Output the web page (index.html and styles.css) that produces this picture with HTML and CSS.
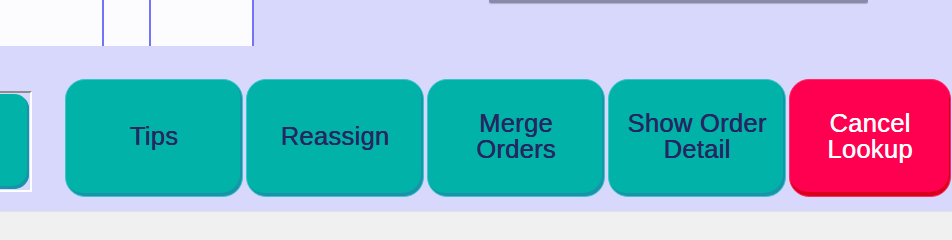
FILE: index.html
```html
<!DOCTYPE html>
<html>
<head>
<meta charset="utf-8">
<link rel="stylesheet" href="styles.css">
</head>
<body>
<div class="screen">
  <div class="top">
    <div class="grid">
      <div class="cell c1"></div>
      <div class="cell c2"></div>
      <div class="cell c3"></div>
    </div>
    <div class="topbar"></div>
  </div>
  <div class="actions">
    <div class="stub-box"><div class="stub-btn"></div></div>
    <div class="btns">
      <div class="btn">Tips</div>
      <div class="btn">Reassign</div>
      <div class="btn">Merge<br>Orders</div>
      <div class="btn">Show Order<br>Detail</div>
      <div class="btn cancel">Cancel<br>Lookup</div>
    </div>
  </div>
  <div class="status"></div>
</div>
</body>
</html>
```
FILE: styles.css
```css
html, body {
  margin: 0;
  padding: 0;
}
html {
  background: #f0f0f0;
}
body {
  width: 952px;
  overflow: hidden;
  background: #d8d8fc;
  font-family: "Liberation Sans", Arial, sans-serif;
}
.screen {
  display: flex;
  flex-direction: column;
  min-height: 100vh;
}
.top {
  display: flex;
  height: 46px;
}
.grid {
  display: flex;
  width: 254px;
  height: 46px;
  background: #fcfcff;
}
.cell {
  height: 46px;
  box-sizing: border-box;
  border-right: 2px solid #7474fa;
}
.c1 { width: 104px; }
.c2 { width: 47px; }
.c3 { width: 103px; }
.topbar {
  margin-left: 235px;
  width: 379px;
  height: 3px;
  background: #8a8aa8;
  border-radius: 0 0 2px 2px;
  box-shadow: 0 1px 1px rgba(90, 90, 130, 0.35);
}
.actions {
  display: flex;
  align-items: flex-start;
  margin-top: 33px;
  height: 118px;
}
.stub-box {
  margin-top: 12px;
  width: 32px;
  height: 101px;
  box-sizing: border-box;
  border-top: 2px solid #8e8e8e;
  border-right: 2px solid #ffffff;
  border-bottom: 2px solid #ffffff;
  overflow: hidden;
  padding-top: 1px;
}
.stub-btn {
  margin-left: -20px;
  width: 49px;
  height: 95px;
  box-sizing: border-box;
  background: #00b2a8;
  border-radius: 15px;
  box-shadow: inset -2px -3px 0 #1a93a8;
}
.btns {
  display: flex;
  gap: 3px;
  margin-left: 33px;
}
.btn {
  width: 178px;
  height: 118px;
  box-sizing: border-box;
  display: flex;
  align-items: center;
  justify-content: center;
  text-align: center;
  padding-bottom: 5px;
  background: #00b2a8;
  border: 1px solid #3cc4cc;
  border-radius: 20px;
  box-shadow: inset -2px -3px 0 #1a93a8;
  color: #262660;
  font-size: 25.5px;
  line-height: 26px;
  letter-spacing: 0.3px;
  text-shadow: 0.4px 0 0 #262660;
}
.btn.cancel {
  width: 162px;
  background: #ff0050;
  border-color: #ff2a66;
  box-shadow: inset -1px -4px 0 #d8001a;
  color: #ffffff;
  text-shadow: 0.4px 0 0 #ffffff;
}
.status {
  margin-top: 14px;
  flex: 1;
  min-height: 5px;
  background: #f0f0f0;
  border-top: 1px solid #e2e2e6;
}
```
